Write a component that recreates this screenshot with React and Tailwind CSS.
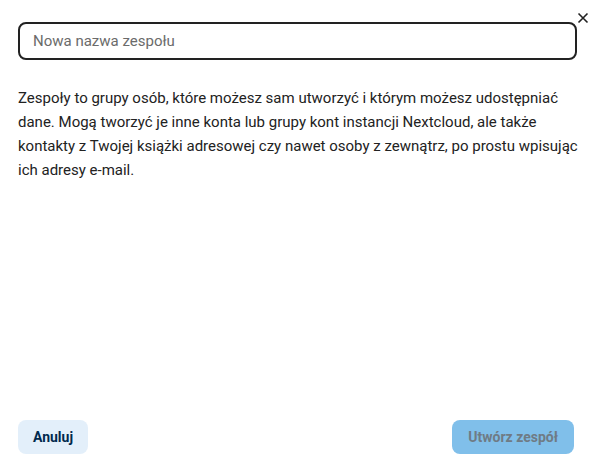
export default function App() {
  return (
    <div className="relative flex h-[469px] w-[595px] flex-col bg-white px-[18px] pt-[22px] pb-[15px] font-['Roboto',sans-serif] text-[#222222]">
      {/* Close */}
      <button className="absolute right-[4px] top-[10px] flex h-[16px] w-[16px] items-center justify-center text-[#222222]">
        <svg width="12" height="12" viewBox="0 0 12 12" fill="none" stroke="currentColor" strokeWidth="1.6">
          <path d="M1.5 1.5l9 9M10.5 1.5l-9 9" />
        </svg>
      </button>

      {/* Name field */}
      <div className="flex h-[38px] items-center rounded-[8px] border-2 border-[#222222] px-[13px]">
        <input
          className="w-full bg-transparent text-[15px] text-[#222222] outline-none placeholder:text-[#6b6b6b]"
          placeholder="Nowa nazwa zespołu"
        />
      </div>

      <p className="mt-[26px] w-[577px] whitespace-nowrap text-[15px] leading-[24px] text-[#222222]">
        Zespoły to grupy osób, które możesz sam utworzyć i którym możesz udostępniać
        <br />
        dane. Mogą tworzyć je inne konta lub grupy kont instancji Nextcloud, ale także
        <br />
        kontakty z Twojej książki adresowej czy nawet osoby z zewnątrz, po prostu wpisując
        <br />
        ich adresy e-mail.
      </p>

      <div className="mt-auto flex items-center justify-between pr-[3px]">
        <button className="h-[34px] rounded-[8px] bg-[#e3effa] px-[15px] text-[14px] font-bold text-[#00294d]">
          Anuluj
        </button>
        <button className="h-[34px] rounded-[8px] bg-[#80bfea] px-[16px] text-[14px] font-bold text-[#6f7b85]">
          Utwórz zespół
        </button>
      </div>
    </div>
  )
}
